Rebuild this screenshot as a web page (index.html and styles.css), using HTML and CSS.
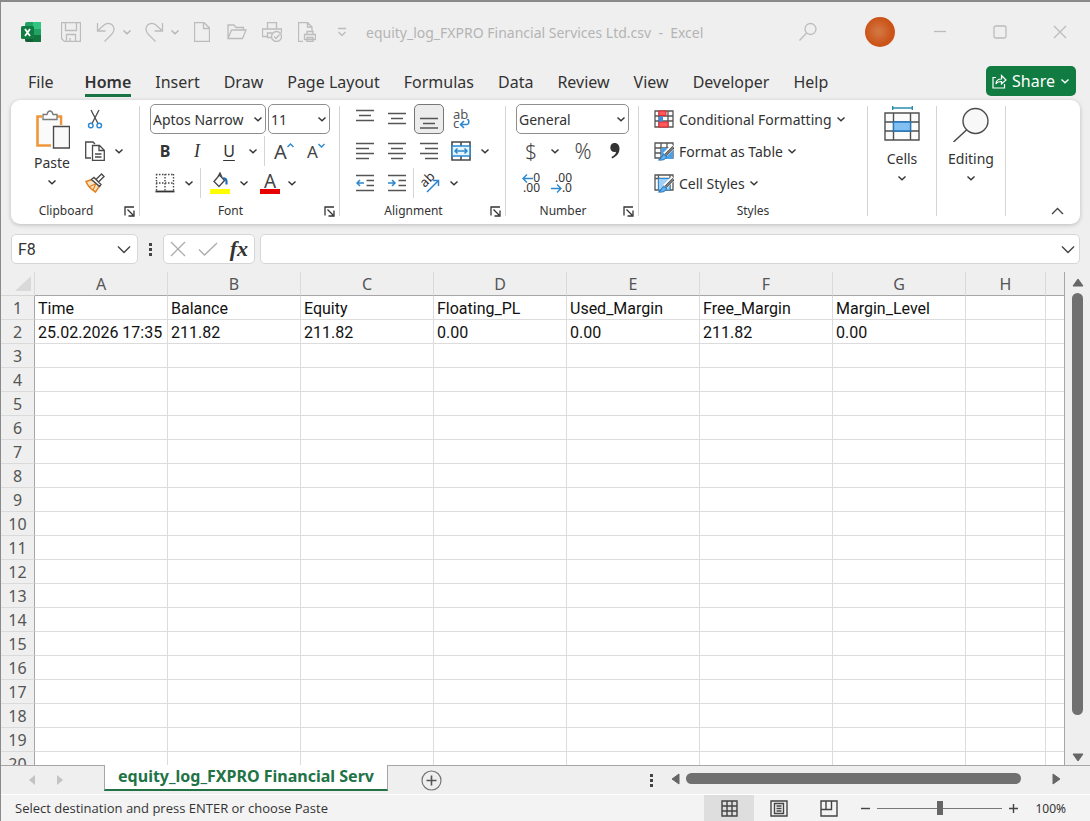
FILE: index.html
```
<!DOCTYPE html>
<html lang="en">
<head>
    <meta charset="UTF-8">
    <meta name="viewport" content="width=device-width, initial-scale=1.0">
    <title>equity_log_FXPRO Financial Services Ltd.csv - Excel</title>
    <link rel="stylesheet" href="styles.css">
</head>
<body>
    <!-- shared icons -->
    <svg class="sprite" aria-hidden="true">
        <symbol id="chevron" viewBox="0 0 10 10"><path d="M1.500 3.500 5 6.800 8.500 3.500" fill="none" stroke="currentColor" stroke-width="1.400"/></symbol>
        <symbol id="launcher" viewBox="0 0 11 11"><path d="M1 9.500V1h9M3.500 3.500 9 9M10 4.500V10H4.500" fill="none" stroke="currentColor" stroke-width="1.300"/></symbol>
    </svg>

    <header class="title-bar">
        <span class="app-logo">
            <svg width="20" height="20" viewBox="0 0 20 20">
                <path d="M6 0h14v20H6a2 2 0 0 1-2-2V2a2 2 0 0 1 2-2z" fill="#21a366"/>
                <path d="M12 0h8v7h-8z" fill="#33c481"/>
                <path d="M4 7h8v6H4z" fill="#107c41"/>
                <path d="M4 13h16v5a2 2 0 0 1-2 2H6a2 2 0 0 1-2-2z" fill="#185c37"/>
                <path d="M12 13h8v5a2 2 0 0 1-2 2h-6z" fill="#12753d"/>
                <rect y="4" width="13" height="13" rx="1.500" fill="#107c41"/>
                <path d="m4 7 5 7M9 7l-5 7" stroke="#fff" stroke-width="1.800"/>
            </svg>
        </span>
        <button class="quick" aria-label="Save">
            <svg width="20" height="20" viewBox="0 0 20 20"><path d="M.5.5h19v19h-16l-3-3zM4.500.5v8h11v-8M5.500 19.500v-7h9v7M9 16v3.500"/></svg>
        </button>
        <div class="quick-history">
            <div class="quick-split">
                <button class="quick" aria-label="Undo"><svg width="20" height="20" viewBox="0 0 20 20"><path d="M1.500 1v8h8M1.500 9 8 3C12-.5 18 2 18 7.500c0 2-1 3.500-2.500 5L8.500 19.500"/></svg></button>
                <button class="quick quick-menu" aria-label="Undo list"><svg width="10" height="10"><use href="#chevron"/></svg></button>
            </div>
            <div class="quick-split">
                <button class="quick" aria-label="Redo"><svg width="20" height="20" viewBox="0 0 20 20"><path d="M18.500 1v8h-8M18.500 9 12 3C8-.5 2 2 2 7.500c0 2 1 3.500 2.500 5L11.500 19.500"/></svg></button>
                <button class="quick quick-menu" aria-label="Redo list"><svg width="10" height="10"><use href="#chevron"/></svg></button>
            </div>
        </div>
        <div class="quick-files">
            <button class="quick" aria-label="New"><svg width="16" height="20" viewBox="0 0 16 20"><path d="M.5.500h9.500l5.500 5.500v13.500H.5zM9.500.5v6h6"/></svg></button>
            <button class="quick" aria-label="Open"><svg width="20" height="16" viewBox="0 0 20 16"><path d="M1 14.500V1h6l2 2.500h7.500V6M1 14.500 4.500 6H19l-3.500 8.500z"/></svg></button>
            <button class="quick" aria-label="Quick Print"><svg width="20" height="20" viewBox="0 0 20 20"><path d="M5.500 7V.5h9V7M9 15.500H5.500V11h5M5.500 14.500h-5V7h19v4"/><circle cx="14.500" cy="14.500" r="5"/><path d="m12 14.500 2 2 3.500-4"/></svg></button>
            <button class="quick" aria-label="Print Preview"><svg width="18" height="20" viewBox="0 0 18 20"><path d="M5 19.500H.5V.5h9L14 5v4M9.500.5V5H14M9 12.500v-3h6v3M6.500 12.500h11v5h-11zM9 15.500h6v4H9z"/></svg></button>
            <button class="quick" aria-label="Customize toolbar"><svg width="10" height="10" viewBox="0 0 10 10"><path d="M1 1.500h8M1.500 5 5 8.500 8.500 5"/></svg></button>
        </div>
        <span class="doc-title">equity_log_FXPRO Financial Services Ltd.csv&nbsp; -&nbsp; Excel</span>
        <button class="window-btn" aria-label="Search"><svg width="20" height="20" viewBox="0 0 20 20"><circle cx="12.500" cy="7" r="5.500"/><path d="M8.500 11 1.500 18.500"/></svg></button>
        <button class="avatar" aria-label="Account"></button>
        <div class="window-controls">
            <button class="window-btn" aria-label="Minimize"><svg width="14" height="14" viewBox="0 0 14 14"><path d="M1 6.500h12"/></svg></button>
            <button class="window-btn" aria-label="Maximize"><svg width="14" height="14" viewBox="0 0 14 14"><rect x="1" y="1" width="12" height="12" rx="1.500"/></svg></button>
            <button class="window-btn" aria-label="Close"><svg width="14" height="14" viewBox="0 0 14 14"><path d="m1 1 12 12M13 1 1 13"/></svg></button>
        </div>
    </header>

    <nav class="tabs">
        <a href="#" class="tab-file">File</a>
        <a href="#" class="active">Home</a>
        <a href="#">Insert</a>
        <a href="#">Draw</a>
        <a href="#">Page Layout</a>
        <a href="#">Formulas</a>
        <a href="#">Data</a>
        <a href="#">Review</a>
        <a href="#">View</a>
        <a href="#">Developer</a>
        <a href="#">Help</a>
        <button class="share">
            <svg width="15" height="15" viewBox="0 0 15 15"><path d="M4 3.500H1v10.500h11.500V10M4 10c0-3 2-5 5.500-5V1.500L14 6 9.500 10V7.500C7 7.500 5 8 4 10z" fill="none" stroke="#fff" stroke-width="1.200"/></svg>
            Share
            <svg class="chev" width="10" height="10"><use href="#chevron"/></svg>
        </button>
    </nav>

    <section class="ribbon">
        <div class="group clipboard">
            <div class="group-body clipboard-body">
                <button class="big">
                    <svg width="36" height="40" viewBox="0 0 36 40">
                        <path d="M8 6.500H3.500v29H17M21 6.500h6V15" fill="none" stroke="#f0963a" stroke-width="2.600"/>
                        <path d="M5 8h20.500v8H17v18H5z" fill="#fafafa"/>
                        <path d="M9 9.500v-5h4c.5-2.500 1.500-3.500 3-3.500s2.500 1 3 3.500h4v5z" fill="#fff" stroke="#7a7a7a" stroke-width="1.300"/>
                        <path d="M19.500 16.500h16v21.500h-16z" fill="#f9f9f9" stroke="#4a4a4a" stroke-width="1.400"/>
                    </svg>
                    Paste
                    <svg class="chev" width="10" height="10"><use href="#chevron"/></svg>
                </button>
                <div class="clip-tools">
                    <button class="tool" aria-label="Cut"><svg width="16" height="20" viewBox="0 0 16 20"><path d="M4 1l7 13.500M12 1 5 14.500" fill="none" stroke="#4a4a4a" stroke-width="1.300"/><g fill="#fff" stroke="#2b88d0" stroke-width="1.400"><circle cx="3.800" cy="16.500" r="2.300"/><circle cx="12.200" cy="16.500" r="2.300"/></g></svg></button>
                    <div class="pair">
                        <button class="tool" aria-label="Copy"><svg width="20" height="20" viewBox="0 0 20 20"><path d="M6 17H.7V1H8l2 2" fill="none" stroke="#4a4a4a" stroke-width="1.300"/><path d="M7.500 4.500h7l4.800 4.800V19.300H7.500zM14 4.500v5h5.300M10 13h6.500M10 16h6.500" fill="#fff" stroke="#4a4a4a" stroke-width="1.300"/></svg></button>
                        <button class="drop" aria-label="Copy options"><svg width="10" height="10"><use href="#chevron"/></svg></button>
                    </div>
                    <button class="tool" aria-label="Format Painter"><svg width="20" height="20" viewBox="0 0 20 20"><path d="M7 6.500 1 8.500c2 5 5 8 9.500 10.500l4-6z" fill="#fde3c6" stroke="#e5811b" stroke-width="1.500"/><path d="m4 14 7-3.500-3 6.500" fill="none" stroke="#e5811b" stroke-width="1.200"/><path d="m6.500 6.500 2.500-2 7 7-1.500 2zM11 6.500 16.500 1 19 3.500 13.500 9" fill="#fff" stroke="#4a4a4a" stroke-width="1.400"/></svg></button>
                </div>
            </div>
            <div class="group-label">Clipboard</div>
            <button class="launcher" aria-label="Clipboard settings"><svg width="11" height="11"><use href="#launcher"/></svg></button>
        </div>

        <div class="group font">
            <div class="group-body">
                <div class="tool-row fields">
                    <label class="field font-name"><select aria-label="Font"><option>Aptos Narrow</option></select><svg width="10" height="10"><use href="#chevron"/></svg></label>
                    <label class="field font-size"><select aria-label="Font size"><option>11</option></select><svg width="10" height="10"><use href="#chevron"/></svg></label>
                </div>
                <div class="tool-row">
                    <button class="tool letter bold">B</button>
                    <button class="tool letter italic">I</button>
                    <button class="tool letter underline">U</button>
                    <button class="drop" aria-label="Underline options"><svg width="10" height="10"><use href="#chevron"/></svg></button>
                    <span class="split"></span>
                    <button class="tool grow" aria-label="Increase font size">A<svg width="7" height="5" viewBox="0 0 7 5"><path d="M.5 4 3.500 1l3 3" fill="none" stroke="#2b88d0" stroke-width="1.400"/></svg></button>
                    <button class="tool grow shrink" aria-label="Decrease font size">A<svg width="7" height="5" viewBox="0 0 7 5"><path d="m.5 1 3 3 3-3" fill="none" stroke="#2b88d0" stroke-width="1.400"/></svg></button>
                </div>
                <div class="tool-row">
                    <button class="tool" aria-label="Borders"><svg width="20" height="20" viewBox="0 0 20 20"><path d="M1 1.500h18M1 10h18M1.500 1v17M10 1v17M18.500 1v17" fill="none" stroke="#4a4a4a" stroke-width="1.400" stroke-dasharray="1.500 1.500"/><path d="M.5 18.500h19" stroke="#333" stroke-width="1.800"/></svg></button>
                    <button class="drop" aria-label="Border options"><svg width="10" height="10"><use href="#chevron"/></svg></button>
                    <span class="split"></span>
                    <button class="tool" aria-label="Fill Color"><svg width="20" height="22" viewBox="0 0 20 22"><path d="M4 9.500 9.500 3l5 5.500-5.500 6zM7.500 5.500 10 1l2 4.500" fill="#fff" stroke="#4a4a4a" stroke-width="1.400"/><path d="M13 6.500c3-.5 4 1.500 3.500 6" fill="none" stroke="#1e6fb5" stroke-width="2.200"/><path d="M0 17h20v5H0z" fill="#ffff00"/></svg></button>
                    <button class="drop" aria-label="Fill colors"><svg width="10" height="10"><use href="#chevron"/></svg></button>
                    <button class="tool font-color" aria-label="Font Color">A</button>
                    <button class="drop" aria-label="Font colors"><svg width="10" height="10"><use href="#chevron"/></svg></button>
                </div>
            </div>
            <div class="group-label">Font</div>
            <button class="launcher" aria-label="Font settings"><svg width="11" height="11"><use href="#launcher"/></svg></button>
        </div>

        <div class="group alignment">
            <div class="group-body">
                <div class="tool-row lines">
                    <button class="tool" aria-label="Top Align"><svg width="18" height="20" viewBox="0 0 18 20"><path d="M0 1.500h18M3 6.500h12M0 11.500h18"/></svg></button>
                    <button class="tool" aria-label="Middle Align"><svg width="18" height="20" viewBox="0 0 18 20"><path d="M0 4.500h18M3 9.500h12M0 14.500h18"/></svg></button>
                    <button class="tool pressed" aria-label="Bottom Align"><svg width="18" height="20" viewBox="0 0 18 20"><path d="M0 9.500h18M3 14.500h12M0 19h18"/></svg></button>
                    <button class="tool wrap" aria-label="Wrap Text"><span>ab</span><span>c<svg width="11" height="10" viewBox="0 0 11 10"><path d="M8 0c2.500 1 2.500 5 0 5.500H1.500M5 2 1.500 5.500 5 9" fill="none" stroke="#2b88d0" stroke-width="1.600"/></svg></span></button>
                </div>
                <div class="tool-row lines">
                    <button class="tool" aria-label="Align Left"><svg width="18" height="18" viewBox="0 0 18 18"><path d="M0 1.500h18M0 6.500h13M0 11.500h18M0 16.500h13"/></svg></button>
                    <button class="tool" aria-label="Center"><svg width="18" height="18" viewBox="0 0 18 18"><path d="M0 1.500h18M3 6.500h12M0 11.500h18M3 16.500h12"/></svg></button>
                    <button class="tool" aria-label="Align Right"><svg width="18" height="18" viewBox="0 0 18 18"><path d="M0 1.500h18M5 6.500h13M0 11.500h18M5 16.500h13"/></svg></button>
                    <button class="tool merge" aria-label="Merge and Center"><svg width="20" height="20" viewBox="0 0 20 20"><path d="M1 1h18v18H1zM10 1v4M10 15v4" fill="#fff" stroke="#4a4a4a" stroke-width="1.600"/><path d="M1 5h18v10H1z" fill="#e8f4fd" stroke="#2b88d0" stroke-width="1.500"/><path d="M4 10h12M6.500 7.500 4 10l2.500 2.500M13.500 7.500 16 10l-2.500 2.500" fill="none" stroke="#2b88d0" stroke-width="1.500"/></svg></button>
                    <button class="drop" aria-label="Merge options"><svg width="10" height="10"><use href="#chevron"/></svg></button>
                </div>
                <div class="tool-row lines">
                    <button class="tool" aria-label="Decrease Indent"><svg width="18" height="18" viewBox="0 0 18 18"><path d="M0 1.500h18M10.500 6.500H18M10.500 11.500H18M0 16.500h18"/><path class="blue" d="M1 9h7M4 6 1 9l3 3"/></svg></button>
                    <button class="tool" aria-label="Increase Indent"><svg width="18" height="18" viewBox="0 0 18 18"><path d="M0 1.500h18M10.500 6.500H18M10.500 11.500H18M0 16.500h18"/><path class="blue" d="M0 9h7M4 6l3 3-3 3"/></svg></button>
                    <span class="split"></span>
                    <button class="tool orient" aria-label="Orientation"><span>ab</span><svg width="14" height="14" viewBox="0 0 14 14"><path class="blue" d="M1 13 12.500 1.500M7 1.500h5.500V7"/></svg></button>
                    <button class="drop" aria-label="Orientation options"><svg width="10" height="10"><use href="#chevron"/></svg></button>
                </div>
            </div>
            <div class="group-label">Alignment</div>
            <button class="launcher" aria-label="Alignment settings"><svg width="11" height="11"><use href="#launcher"/></svg></button>
        </div>

        <div class="group number">
            <div class="group-body">
                <div class="tool-row fields">
                    <label class="field format"><select aria-label="Number format"><option>General</option></select><svg width="10" height="10"><use href="#chevron"/></svg></label>
                </div>
                <div class="tool-row">
                    <button class="tool symbol">$</button>
                    <button class="drop" aria-label="Currency options"><svg width="10" height="10"><use href="#chevron"/></svg></button>
                    <button class="tool symbol percent">%</button>
                    <button class="tool" aria-label="Comma Style"><svg width="10" height="16" viewBox="0 0 10 16"><path d="M4.500 0C8 0 9.500 2.500 9.500 5.500c0 5-3 8-7.500 10L1.500 14C4.500 12.500 6 11 6 8.800 3 9.800.3 8 .3 4.500.3 2 2 0 4.500 0z" fill="#333"/></svg></button>
                </div>
                <div class="tool-row">
                    <button class="tool decimal" aria-label="Increase Decimal"><span><svg width="11" height="9" viewBox="0 0 11 9"><path d="M1 4.500h10M5 .5l-4 4 4 4"/></svg>0</span><span>.00</span></button>
                    <button class="tool decimal" aria-label="Decrease Decimal"><span>.00</span><span><svg width="11" height="9" viewBox="0 0 11 9"><path d="M0 4.500h10M6 .5l4 4-4 4"/></svg>.0</span></button>
                </div>
            </div>
            <div class="group-label">Number</div>
            <button class="launcher" aria-label="Number settings"><svg width="11" height="11"><use href="#launcher"/></svg></button>
        </div>

        <div class="group styles">
            <div class="group-body">
                <button class="style-btn">
                    <svg width="20" height="18" viewBox="0 0 20 18"><path d="M1 1h18v16H1zM1 6h18M1 11h18M5 1v16M14 1v16" fill="#fff" stroke="#555" stroke-width="1.300"/><path d="M5 1h7v4.500H5zM5 12h9v5H5z" fill="#ff5a5f" stroke="#e8262c"/><path d="M5 6.500h4v5H5z" fill="#3b8fe0"/></svg>
                    Conditional Formatting
                    <svg class="chev" width="10" height="10"><use href="#chevron"/></svg>
                </button>
                <button class="style-btn">
                    <svg width="20" height="19" viewBox="0 0 20 19"><path d="M1 1h18v15H1zM1 6h18M1 11h18M7 1v15M13 1v15" fill="#fff" stroke="#555" stroke-width="1.300"/><path d="M7 6h12v11H7z" fill="#4da0e6"/><path d="M19.500 4 11 12.500" stroke="#fff" stroke-width="5"/><path d="M19.500 5 11.500 13" stroke="#444" stroke-width="2.600"/><path d="M19.500 5 11.500 13" stroke="#fff" stroke-width=".6"/><path d="M12.500 14.500c-.5 3-4 4-8 3.500 3-1 3-5 5.500-5.500z" fill="#63b2f0" stroke="#1e6fb5"/></svg>
                    Format as Table
                    <svg class="chev" width="10" height="10"><use href="#chevron"/></svg>
                </button>
                <button class="style-btn">
                    <svg width="20" height="19" viewBox="0 0 20 19"><path d="M1 1h18v15H1zM1 4.500h18M4.500 1v15M16 1v15" fill="#fff" stroke="#555" stroke-width="1.300"/><path d="M4.500 4.500H16V16H4.500z" fill="#9fcff5" stroke="#2b88d0"/><path d="M19.500 4 11 12.500" stroke="#fff" stroke-width="5"/><path d="M19.500 5 11.500 13" stroke="#444" stroke-width="2.600"/><path d="M19.500 5 11.500 13" stroke="#fff" stroke-width=".6"/><path d="M12.500 14.500c-.5 3-4 4-8 3.500 3-1 3-5 5.500-5.500z" fill="#63b2f0" stroke="#1e6fb5"/></svg>
                    Cell Styles
                    <svg class="chev" width="10" height="10"><use href="#chevron"/></svg>
                </button>
            </div>
            <div class="group-label">Styles</div>
        </div>

        <div class="group single">
            <button class="big">
                <svg width="36" height="36" viewBox="0 0 36 36"><path d="M9 2h19M8.700 0v4M28.300 0v4" fill="none" stroke="#2a8fae" stroke-width="1.400"/><path d="M1 7h34v27H1zM1 16h34M1 25h34M9.500 7v27M26.500 7v27" fill="#fbfbfb" stroke="#505050" stroke-width="1.400"/><path d="M9.500 16h17v9h-17z" fill="#83bff0" stroke="#1e78c2" stroke-width="1.300"/></svg>
                Cells
                <svg class="chev" width="10" height="10"><use href="#chevron"/></svg>
            </button>
        </div>
        <div class="group single">
            <button class="big">
                <svg width="38" height="36" viewBox="0 0 38 36"><circle cx="23.500" cy="15" r="12.500" fill="#f8f8f8" stroke="#4a4a4a" stroke-width="1.400"/><path d="M14.500 24 1.500 36" stroke="#4a4a4a" stroke-width="1.500"/></svg>
                Editing
                <svg class="chev" width="10" height="10"><use href="#chevron"/></svg>
            </button>
        </div>
        <button class="collapse" aria-label="Collapse ribbon"><svg width="13" height="8" viewBox="0 0 13 8"><path d="m1 7 5.500-5.500L12 7" fill="none" stroke="#444" stroke-width="1.400"/></svg></button>
    </section>

    <section class="formula-bar">
        <div class="name-box">
            <input type="text" value="F8" aria-label="Name box">
            <button aria-label="Names"><svg width="14" height="9" viewBox="0 0 14 9"><path d="m1 1.500 6 6 6-6" fill="none" stroke="#444" stroke-width="1.400"/></svg></button>
        </div>
        <span class="dots"><i></i><i></i><i></i></span>
        <div class="entry-tools">
            <button aria-label="Cancel"><svg width="16" height="16" viewBox="0 0 16 16"><path d="m1 1 14 14M15 1 1 15" fill="none" stroke="#ababab" stroke-width="1.300"/></svg></button>
            <button aria-label="Enter"><svg width="20" height="14" viewBox="0 0 20 14"><path d="m1 7.500 5.500 5.500L19 1" fill="none" stroke="#ababab" stroke-width="1.300"/></svg></button>
            <button class="fx">fx</button>
        </div>
        <div class="formula">
            <input type="text" aria-label="Formula">
            <button aria-label="Expand formula bar"><svg width="14" height="9" viewBox="0 0 14 9"><path d="m1 1.500 6 6 6-6" fill="none" stroke="#444" stroke-width="1.400"/></svg></button>
        </div>
    </section>

    <main class="sheet">
        <div class="sheet-view">
            <table class="grid">
                <colgroup>
                    <col class="col-head">
                    <col class="col-data" span="7">
                    <col class="col-narrow">
                    <col>
                </colgroup>
                <thead>
                    <tr><th class="corner"><svg width="16" height="15" viewBox="0 0 16 15"><path d="M16 0v15H0z" fill="#d9d9d9"/></svg></th><th>A</th><th>B</th><th>C</th><th>D</th><th>E</th><th>F</th><th>G</th><th>H</th><th></th></tr>
                </thead>
                <tbody id="rows"></tbody>
            </table>
        </div>
        <div class="v-scroll">
            <svg width="12" height="9" viewBox="0 0 12 9"><path d="M6 1 11 8H1z" fill="#666" stroke="#666" stroke-linejoin="round"/></svg>
            <div class="v-track"><div class="v-thumb"></div></div>
            <svg width="12" height="9" viewBox="0 0 12 9"><path d="M6 8 1 1h10z" fill="#666" stroke="#666" stroke-linejoin="round"/></svg>
        </div>
    </main>

    <footer class="sheet-tabs">
        <div class="tab-nav">
            <button aria-label="Previous sheet"><svg width="6" height="10" viewBox="0 0 6 10"><path d="M6 0v10L0 5z" fill="#c3c3c3"/></svg></button>
            <button aria-label="Next sheet"><svg width="6" height="10" viewBox="0 0 6 10"><path d="M0 0v10l6-5z" fill="#c3c3c3"/></svg></button>
        </div>
        <button class="sheet-tab">equity_log_FXPRO Financial Serv</button>
        <button class="add-sheet" aria-label="New sheet"><svg width="21" height="21" viewBox="0 0 21 21"><circle cx="10.500" cy="10.500" r="9.500" fill="none" stroke="#777" stroke-width="1.200"/><path d="M10.500 5.500v10M5.500 10.500h10" stroke="#555" stroke-width="1.600"/></svg></button>
        <div class="h-scroll">
            <span class="dots"><i></i><i></i><i></i></span>
            <div class="h-bar">
                <svg width="9" height="12" viewBox="0 0 9 12"><path d="M1 6 8 1v10z" fill="#666" stroke="#666" stroke-linejoin="round"/></svg>
                <div class="h-track"><div class="h-thumb"></div></div>
                <svg width="9" height="12" viewBox="0 0 9 12"><path d="M8 6 1 1v10z" fill="#666" stroke="#666" stroke-linejoin="round"/></svg>
            </div>
        </div>
    </footer>

    <div class="status-bar">
        <span class="status-text">Select destination and press ENTER or choose Paste</span>
        <div class="views">
            <button class="active" aria-label="Normal view"><svg width="17" height="17" viewBox="0 0 17 17"><path d="M1 1h15v15H1zM1 6h15M1 11h15M6 1v15M11 1v15"/></svg></button>
            <button aria-label="Page Layout view"><svg width="18" height="17" viewBox="0 0 18 17"><path d="M1 1h16v15H1zM4.500 3.500h9v10h-9zM6.500 6h5M6.500 8.500h5M6.500 11h5"/></svg></button>
            <button aria-label="Page Break view"><svg width="18" height="17" viewBox="0 0 18 17"><path d="M1 1h16v15H1zM1 9.500h10.500V1M6 1v8.500"/></svg></button>
        </div>
        <div class="zoom">
            <button aria-label="Zoom out"><svg width="11" height="11" viewBox="0 0 11 11"><path d="M1 5.500h9"/></svg></button>
            <input type="range" min="0" max="100" value="50" aria-label="Zoom">
            <button aria-label="Zoom in"><svg width="11" height="11" viewBox="0 0 11 11"><path d="M1 5.500h9M5.500 1v9"/></svg></button>
        </div>
        <button class="zoom-level">100%</button>
    </div>

    <script>
        const data = [
            ['Time', 'Balance', 'Equity', 'Floating_PL', 'Used_Margin', 'Free_Margin', 'Margin_Level'],
            ['25.02.2026 17:35', '211.82', '211.82', '0.00', '0.00', '211.82', '0.00']
        ];

        function renderRows() {
            const body = document.getElementById('rows');
            for (let r = 0; r < 20; r++) {
                const row = document.createElement('tr');
                const values = data[r] || [];
                let html = `<th>${r + 1}</th>`;
                for (let c = 0; c < 9; c++) {
                    html += `<td>${values[c] || ''}</td>`;
                }
                row.innerHTML = html;
                body.appendChild(row);
            }
        }

        renderRows();
    </script>
</body>
</html>
```
FILE: styles.css
```
* {
    box-sizing: border-box;
}

body {
    margin: 0;
    height: 100vh;
    display: flex;
    flex-direction: column;
    overflow: hidden;
    background: #efefef;
    border-top: 2px solid #8a8a8a;
    border-left: 1px solid #8a8a8a;
    font-family: "Noto Sans", "Open Sans", sans-serif;
    font-size: 15px;
    color: #333;
}

button,
input,
select {
    font: inherit;
    color: inherit;
    background: none;
    border: none;
    padding: 0;
    margin: 0;
    outline: none;
}

button {
    display: flex;
    align-items: center;
    justify-content: center;
}

svg {
    display: block;
    flex: none;
}

.sprite {
    position: absolute;
    width: 0;
    height: 0;
}

/* title bar */
.title-bar {
    display: flex;
    align-items: center;
    flex: none;
    height: 60px;
    padding: 0 10px;
    color: #b4b4b4;
}

.app-logo,
.title-bar > .quick {
    width: 40px;
    display: flex;
    justify-content: center;
}

.quick svg,
.window-btn svg {
    fill: none;
    stroke: #bcbcbc;
    stroke-width: 1.3;
}

.quick-menu svg {
    stroke: none;
}

.quick-history {
    display: flex;
    gap: 6px;
}

.quick-split {
    display: flex;
}

.quick-split .quick {
    width: 30px;
}

.quick-split .quick-menu {
    width: 12px;
}

.quick-files {
    display: flex;
    margin-left: 3px;
}

.quick-files .quick {
    width: 35px;
}

.doc-title {
    flex: 1;
    padding-left: 7px;
    font-size: 14px;
    white-space: nowrap;
}

.avatar {
    width: 30px;
    height: 30px;
    margin: 0 15px 0 47px;
    border-radius: 50%;
    background: radial-gradient(circle at 45% 48%, #d27440 10%, #cb5317 60%, #d05a1e);
}

.window-controls {
    display: flex;
    margin-right: -10px;
}

.window-controls .window-btn {
    width: 60px;
}

/* ribbon tabs */
.tabs {
    display: flex;
    align-items: center;
    flex: none;
    gap: 24px;
    height: 38px;
    padding: 0 14px 0 27px;
}

.tabs a {
    color: #333;
    text-decoration: none;
    font-size: 16px;
    line-height: 24px;
    padding-top: 5px;
    border-bottom: 3px solid transparent;
    white-space: nowrap;
}

.tabs .tab-file {
    margin-right: 7px;
}

.tabs .active {
    font-weight: 600;
    border-bottom-color: #1a7343;
}

.share {
    margin-left: auto;
    width: 90px;
    height: 30px;
    gap: 5px;
    border-radius: 5px;
    background: #107c41;
    color: #fff;
    font-size: 16px;
}

/* ribbon */
.ribbon {
    display: flex;
    flex: none;
    height: 124px;
    margin: 0 10px;
    padding: 3px 0 0;
    border-radius: 9px;
    background: #fff;
    box-shadow: 0 1px 4px rgba(0, 0, 0, 0.22);
}

.group {
    position: relative;
    display: flex;
    flex-direction: column;
    margin: 3px 0 8px;
    border-right: 1px solid #d4d4d4;
}

.group-body {
    height: 96px;
    flex: none;
    margin-top: -3px;
}

.group-label {
    font-size: 12px;
    line-height: 24px;
    text-align: center;
    padding-right: 18px;
}

.launcher {
    position: absolute;
    right: 4px;
    bottom: -1px;
}

.clipboard {
    width: 129px;
}

.font {
    width: 200px;
}

.alignment {
    width: 166px;
}

.number {
    width: 133px;
}

.styles {
    width: 229px;
}

.styles .group-label {
    padding-right: 0;
}

.single {
    width: 69px;
    align-items: center;
}

.clipboard-body {
    display: flex;
    padding-left: 23px;
}

.big {
    flex-direction: column;
    justify-content: flex-start;
    font-size: 14px;
    line-height: 20px;
}

.big .chev {
    margin-top: 4px;
}

.clipboard .big {
    width: 36px;
    padding-top: 7px;
    line-height: 26px;
}

.clipboard .big .chev {
    margin-top: 1px;
}

.clip-tools {
    padding-left: 9px;
}

.tool-row,
.pair {
    display: flex;
    align-items: center;
    height: 32px;
}

.tool {
    width: 32px;
    height: 32px;
}

.drop {
    width: 16px;
    height: 32px;
}

.split {
    width: 1px;
    height: 30px;
    background: #d4d4d4;
}

.font .group-body,
.number .group-body {
    padding-left: 9px;
}

.font .split {
    margin: 0 3px;
}

.fields {
    gap: 2px;
    padding-left: 1px;
}

.field {
    position: relative;
    height: 30px;
    border: 1px solid #8f8f8f;
    border-radius: 5px;
}

.field select {
    appearance: none;
    width: 100%;
    height: 28px;
    padding-left: 2px;
    font-size: 14px;
}

.field svg {
    position: absolute;
    right: 2px;
    top: 9px;
    pointer-events: none;
}

.font-name {
    width: 116px;
}

.font-size {
    width: 62px;
}

.format {
    width: 113px;
}

.letter {
    font-size: 16px;
}

.bold {
    font-weight: bold;
}

.italic {
    font-family: "Liberation Serif", serif;
    font-style: italic;
    font-size: 18px;
}

.underline {
    text-decoration: underline;
    text-underline-offset: 3px;
}

.grow {
    font-size: 20px;
    color: #444;
}

.grow svg {
    margin-bottom: 12px;
}

.shrink {
    font-size: 17px;
}

.font-color {
    width: 20px;
    height: 22px;
    margin: 0 4px 0 8px;
    border-bottom: 5px solid #e60000;
    font-size: 19px;
    line-height: 16px;
    color: #444;
}

.alignment .group-body {
    padding-left: 9px;
}

.lines svg {
    fill: none;
    stroke: #555;
    stroke-width: 1.5;
}

.lines .blue {
    stroke: #2b88d0;
}

.lines .drop svg {
    stroke: none;
}

.pressed {
    width: 30px;
    height: 30px;
    margin: 0 1px;
    border: 1px solid #777;
    border-radius: 5px;
    background: #ececec;
}

.wrap {
    flex-direction: column;
    align-items: flex-start;
    padding-left: 8px;
    font-size: 13px;
    line-height: 9px;
    color: #555;
}

.wrap span {
    display: flex;
}

.orient {
    position: relative;
}

.orient span {
    position: absolute;
    left: 5px;
    top: 3px;
    font-size: 13px;
    transform: rotate(-45deg);
}

.orient svg {
    position: absolute;
    left: 12px;
    top: 12px;
}

.symbol {
    font-size: 21px;
    font-weight: 300;
    color: #444;
}

.percent {
    margin-left: 4px;
}

.decimal {
    flex-direction: column;
    align-items: flex-end;
    padding-right: 7px;
    font-size: 12px;
    line-height: 10px;
}

.decimal span {
    display: flex;
    align-items: center;
}

.decimal svg {
    fill: none;
    stroke: #2b88d0;
    stroke-width: 1.4;
}

.style-btn {
    height: 32px;
    margin-left: 15px;
    gap: 5px;
    font-size: 14px;
}

.style-btn .chev {
    margin-left: -1px;
}

.single .big svg:first-child {
    margin-bottom: 7px;
}

.collapse {
    margin: auto 16px 9px auto;
}

/* formula bar */
.formula-bar {
    display: flex;
    align-items: center;
    height: 30px;
    margin: 10px 10px 8px;
    flex: none;
}

.name-box,
.entry-tools,
.formula {
    display: flex;
    align-items: center;
    height: 30px;
    border: 1px solid #d6d6d6;
    border-radius: 5px;
    background: #fff;
}

.name-box {
    width: 127px;
    padding: 0 6px;
    justify-content: space-between;
}

.name-box input {
    width: 80px;
    font-family: Roboto, sans-serif;
    font-size: 16px;
}

.dots {
    width: 25px;
    display: flex;
    flex-direction: column;
    align-items: center;
    gap: 2px;
}

.dots i {
    width: 3px;
    height: 3px;
    background: #444;
}

.entry-tools {
    width: 92px;
    justify-content: space-around;
}

.fx {
    font-family: "Liberation Serif", serif;
    font-style: italic;
    font-weight: bold;
    font-size: 22px;
}

.formula {
    flex: 1;
    margin-left: 5px;
    padding-right: 4px;
}

.formula input {
    flex: 1;
}

/* sheet */
.sheet {
    display: flex;
    flex: 1;
    min-height: 0;
}

.sheet-view {
    flex: 1;
    overflow: hidden;
    border-right: 1px solid #a6a6a6;
}

.grid {
    width: 100%;
    table-layout: fixed;
    border-collapse: separate;
    border-spacing: 0;
}

.col-head {
    width: 34px;
}

.col-data {
    width: 133px;
}

.col-narrow {
    width: 80px;
}

.grid th {
    height: 24px;
    padding: 0;
    font-size: 16px;
    font-weight: normal;
    line-height: 20px;
    color: #555;
    background: #efefef;
    border-right: 1px solid #dadada;
    border-bottom: 1px solid #a6a6a6;
}

.grid .corner {
    padding-left: 14px;
    border-bottom-color: #d6d6d6;
}

.grid tbody th {
    border-right-color: #a6a6a6;
    border-bottom-color: #dadada;
}

.grid td {
    height: 24px;
    padding: 2px 0 0 3px;
    background: #fff;
    border-right: 1px solid #dcdcdc;
    border-bottom: 1px solid #dcdcdc;
    font-family: Roboto, sans-serif;
    font-size: 16px;
    line-height: 20px;
    color: #111;
    white-space: nowrap;
}

.grid td:last-child,
.grid thead th:last-child {
    border-right: none;
}

.v-scroll {
    width: 25px;
    display: flex;
    flex-direction: column;
    align-items: center;
    padding: 6px 0 3px;
}

.v-track {
    flex: 1;
    padding: 6px 0;
}

.v-thumb {
    width: 11px;
    height: 93%;
    border-radius: 6px;
    background: #707070;
}

/* sheet tabs */
.sheet-tabs {
    display: flex;
    flex: none;
    height: 29px;
    padding-right: 25px;
    border-top: 1px solid #a6a6a6;
}

.tab-nav {
    display: flex;
    justify-content: center;
    gap: 22px;
    width: 103px;
    padding-right: 13px;
}

.sheet-tab {
    width: 284px;
    height: 26px;
    margin-top: -1px;
    padding-bottom: 2px;
    background: #fff;
    border-left: 1px solid #a6a6a6;
    border-right: 1px solid #a6a6a6;
    border-bottom: 2px solid #217346;
    color: #217346;
    font-size: 16px;
    font-weight: bold;
    white-space: nowrap;
}

.add-sheet {
    margin-left: 33px;
}

.h-scroll {
    display: flex;
    align-items: center;
    width: 40%;
    margin-left: auto;
}

.h-bar {
    display: flex;
    align-items: center;
    flex: 1;
    padding: 0 4px 3px 7px;
}

.h-track {
    flex: 1;
    padding: 0 6px;
}

.h-thumb {
    width: 93%;
    height: 11px;
    border-radius: 6px;
    background: #707070;
}

/* status bar */
.status-bar {
    display: flex;
    align-items: center;
    flex: none;
    height: 27px;
    padding: 0 24px 0 14px;
    background: #f3f3f3;
    border-top: 1px solid #fff;
    font-size: 12px;
}

.status-text {
    flex: 1;
    font-family: "Open Sans", "Noto Sans", sans-serif;
    font-size: 13px;
}

.views {
    display: flex;
}

.views button {
    width: 50px;
    height: 26px;
}

.views .active {
    background: #dedede;
}

.views svg,
.zoom svg {
    fill: none;
    stroke: #444;
    stroke-width: 1.4;
}

.zoom {
    display: flex;
    align-items: center;
    gap: 6px;
    margin: 0 16px 0 6px;
}

.zoom input {
    appearance: none;
    width: 125px;
    height: 16px;
    background: linear-gradient(#777, #777) center / 100% 1px no-repeat;
}

.zoom input::-webkit-slider-thumb {
    appearance: none;
    width: 6px;
    height: 14px;
    background: #666;
}
```
